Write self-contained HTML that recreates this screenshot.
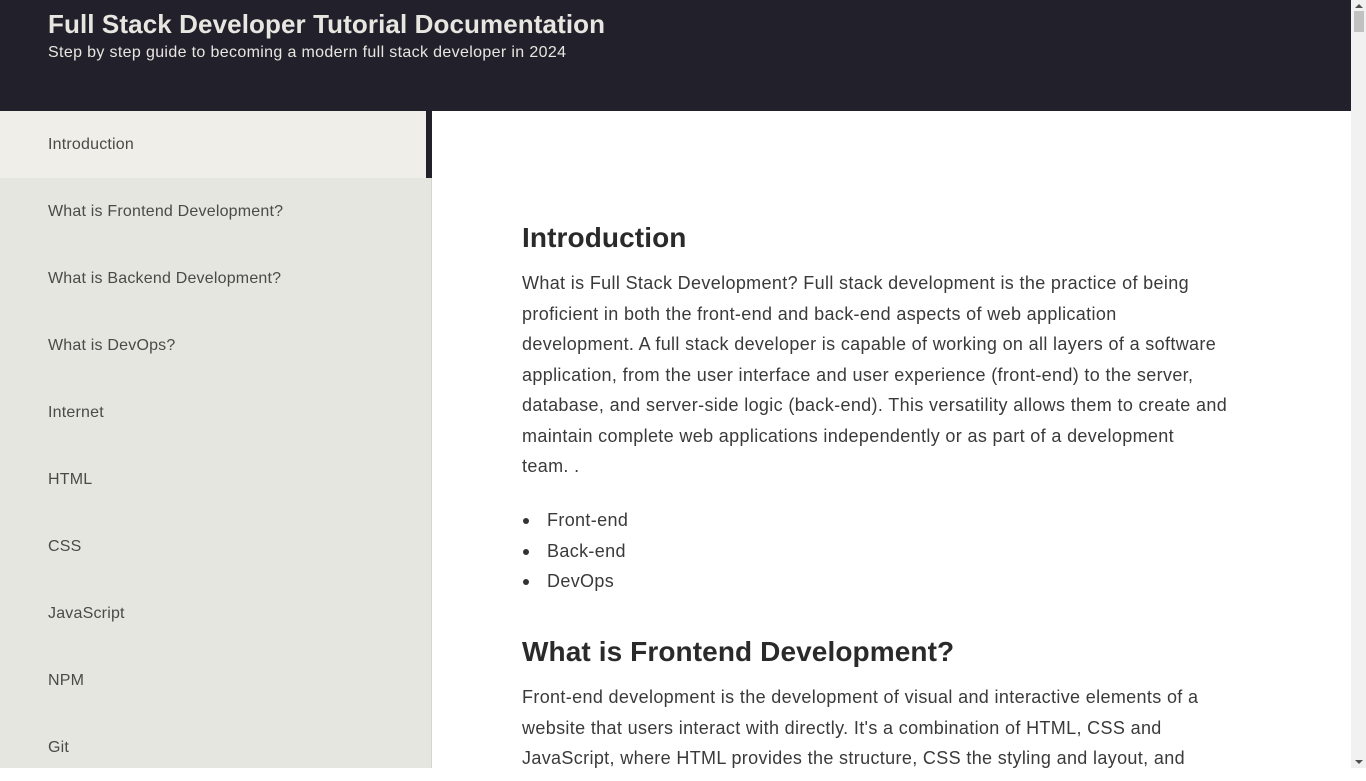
<!DOCTYPE html>
<html><head><style>
*{margin:0;padding:0;box-sizing:border-box}
body{width:1366px;height:768px;overflow:hidden;font-family:"Liberation Sans",sans-serif;background:#fff;position:relative}
header{position:absolute;left:0;top:0;width:1351px;height:111px;background:#22212b;color:#e8e6e0}
header h1{position:absolute;left:48px;top:9px;font-size:26px;font-weight:bold;letter-spacing:0.1px;white-space:nowrap}
header p{position:absolute;left:48px;top:44px;font-size:16px;letter-spacing:0.35px;white-space:nowrap}
nav{position:absolute;left:0;top:111px;width:432px;height:657px;background:#e6e6e0;border-right:1px solid #d6d6d0}
nav div{height:67px;line-height:67px;padding-left:48px;font-size:16px;color:#4a4a48;letter-spacing:0.2px}
nav div.a{background:#efeee8;border-right:6px solid #22212b;margin-right:-1px;height:67px}
main{position:absolute;left:522px;top:0;width:740px;color:#333;white-space:nowrap}
h2{position:absolute;left:0;font-size:28px;font-weight:bold;color:#2a2a2a;letter-spacing:0.1px}
.p{position:absolute;left:0;font-size:18px;line-height:30.5px;letter-spacing:0.35px;color:#3a3a3a}
ul{position:absolute;left:0;list-style:none;font-size:18px;line-height:30.5px;color:#3a3a3a;letter-spacing:0.35px}
ul li{padding-left:25px;position:relative}
ul li:before{content:"";position:absolute;left:1px;top:13px;width:6px;height:6px;border-radius:50%;background:#333}
.sb{position:absolute;left:1351px;top:0;width:15px;height:768px;background:#f1f1f1}
.th{position:absolute;left:1354px;top:11px;width:10px;height:21px;background:#c1c1c1}
</style></head><body>
<header><h1>Full Stack Developer Tutorial Documentation</h1><p>Step by step guide to becoming a modern full stack developer in 2024</p></header>
<nav>
<div class="a">Introduction</div>
<div>What is Frontend Development?</div>
<div>What is Backend Development?</div>
<div>What is DevOps?</div>
<div>Internet</div>
<div>HTML</div>
<div>CSS</div>
<div>JavaScript</div>
<div>NPM</div>
<div>Git</div>
</nav>
<main>
<h2 style="top:222px">Introduction</h2>
<div class="p" style="top:268px">What is Full Stack Development? Full stack development is the practice of being<br>proficient in both the front-end and back-end aspects of web application<br>development. A full stack developer is capable of working on all layers of a software<br>application, from the user interface and user experience (front-end) to the server,<br>database, and server-side logic (back-end). This versatility allows them to create and<br>maintain complete web applications independently or as part of a development<br>team. .</div>
<ul style="top:505px"><li>Front-end</li><li>Back-end</li><li>DevOps</li></ul>
<h2 style="top:636px">What is Frontend Development?</h2>
<div class="p" style="top:682px">Front-end development is the development of visual and interactive elements of a<br>website that users interact with directly. It's a combination of HTML, CSS and<br>JavaScript, where HTML provides the structure, CSS the styling and layout, and</div>
</main>
<div class="sb"></div><div class="th"></div>
<div style="position:absolute;left:1355px;top:4px;width:0;height:0;border-left:4px solid transparent;border-right:4px solid transparent;border-bottom:4px solid #505050"></div>
<div style="position:absolute;left:1355px;top:760px;width:0;height:0;border-left:4px solid transparent;border-right:4px solid transparent;border-top:4px solid #505050"></div>
</body></html>
